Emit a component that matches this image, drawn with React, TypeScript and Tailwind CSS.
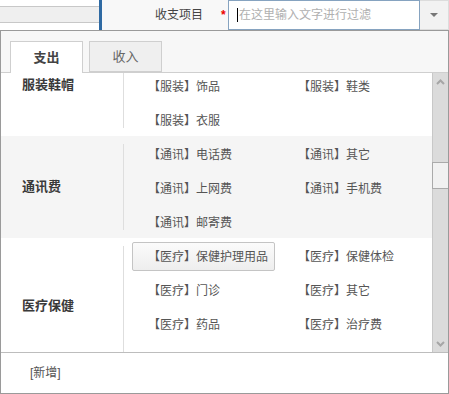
import React from "react";

type Row = { label: string; items: string[]; bg: string; hover?: string; skip?: boolean };

const rows: Row[] = [
  {
    label: "服装鞋帽",
    bg: "bg-white",
    skip: true,
    items: ["【服装】饰品", "【服装】鞋类", "【服装】衣服"],
  },
  {
    label: "通讯费",
    bg: "bg-[#f5f5f5]",
    items: ["【通讯】电话费", "【通讯】其它", "【通讯】上网费", "【通讯】手机费", "【通讯】邮寄费"],
  },
  {
    label: "医疗保健",
    bg: "bg-white",
    hover: "【医疗】保健护理用品",
    items: [
      "【医疗】保健护理用品",
      "【医疗】保健体检",
      "【医疗】门诊",
      "【医疗】其它",
      "【医疗】药品",
      "【医疗】治疗费",
      "【医疗】住院费",
    ],
  },
];

function Chevron({ up }: { up?: boolean }) {
  return (
    <svg width="9" height="6" viewBox="0 0 9 6">
      <polyline
        points={up ? "1,5 4.5,1.5 8,5" : "1,1 4.5,4.5 8,1"}
        fill="none"
        stroke="#a6a6a6"
        strokeWidth="2"
      />
    </svg>
  );
}

export default function App() {
  return (
    <div
      className="w-[449px] h-[394px] overflow-hidden bg-white text-[12px] text-[#555]"
      style={{ fontFamily: '"Liberation Sans", "Noto Sans CJK SC", sans-serif' }}
    >
      {/* top bar */}
      <div className="flex h-[30px]">
        <div className="w-[99px] pt-[6px] bg-white">
          <div className="h-[17px] border-y border-[#c8c8c8] bg-[#efefef]" />
        </div>
        <div className="w-[3px] bg-[#2f6aa3]" />
        <div className="flex-1 flex items-center bg-[#f8f8f8]">
          <span className="ml-[53px] text-[#444]">收支项目</span>
          <span className="ml-[18px] w-[7px] text-[#e00] font-bold leading-none">*</span>
          <div className="w-[192px] h-[30px] border border-[#86a3c0] bg-white flex items-center pl-[8px]">
            <span className="w-px h-[14px] bg-black" />
            <span className="ml-px text-[#b0b0b0]">在这里输入文字进行过滤</span>
          </div>
          <div className="flex-1 h-[30px] bg-[#f2f2f2] border-y border-r border-[#dcdcdc] flex items-center justify-center">
            <svg width="8" height="5" viewBox="0 0 8 5">
              <polygon points="0,0 8,0 4,4" fill="#777" />
            </svg>
          </div>
        </div>
      </div>

      {/* popup */}
      <div className="h-[364px] border border-[#9a9a9a] flex flex-col">
        {/* tabs */}
        <div className="h-[42px] bg-[#f7f7f7] border-b border-[#cfcfcf] flex items-end pl-[9px] gap-[6px]">
          <div className="w-[73px] h-[32px] -mb-px bg-white border-x border-t border-[#cfcfcf] flex items-center justify-center font-bold text-[13px] text-[#444]">
            支出
          </div>
          <div className="w-[73px] h-[31px] bg-[#efefef] border border-[#cfcfcf] flex items-center justify-center text-[13px] text-[#666]">
            收入
          </div>
        </div>

        {/* content */}
        <div className="h-[279px] flex overflow-hidden">
          <div className="flex-1 overflow-hidden">
            <div className="-mt-[39px]">
              {rows.map((r) => (
                <div key={r.label} className={`flex ${r.bg}`}>
                  <div className="w-[123px] py-[8px] flex">
                    <div className="flex-1 border-r border-[#dedede] flex items-center pl-[21px] font-bold text-[13px] text-[#3a3a3a]">
                      {r.label}
                    </div>
                  </div>
                  <div
                    className={`pl-[8px] grid grid-cols-[150px_150px] content-start ${
                      r.skip ? "pt-[34px]" : ""
                    }`}
                  >
                    {r.items.map((it) => (
                      <div
                        key={it}
                        className={`mt-[4px] mb-px h-[29px] w-[143px] flex items-center pl-[15px] pt-px border whitespace-nowrap ${
                          it === r.hover
                            ? "border-[#c4c4c4] bg-gradient-to-b from-[#fbfbfb] to-[#eeeeee] rounded-[2px]"
                            : "border-transparent"
                        }`}
                      >
                        {it}
                      </div>
                    ))}
                  </div>
                </div>
              ))}
            </div>
          </div>
          {/* scrollbar */}
          <div className="w-[16px] bg-[#dbdbdb] border-l border-[#c8c8c8] flex flex-col">
            <div className="h-[17px] flex items-center justify-center">
              <Chevron up />
            </div>
            <div className="h-[72px]" />
            <div className="h-[27px] -mx-px border border-[#aaaaaa] bg-[#f1f1f1]" />
            <div className="flex-1" />
            <div className="h-[17px] flex items-center justify-center">
              <Chevron />
            </div>
          </div>
        </div>

        {/* footer */}
        <div className="flex-1 border-t border-[#bdbdbd] flex items-center pl-[29px] text-[#555]">
          [新增]
        </div>
      </div>
    </div>
  );
}
